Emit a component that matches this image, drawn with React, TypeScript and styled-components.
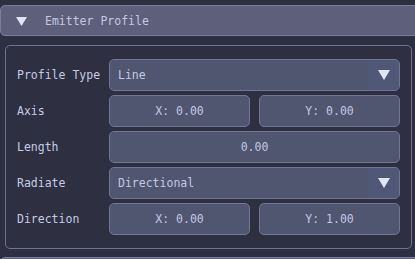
import styled, { createGlobalStyle } from 'styled-components';

const GlobalStyle = createGlobalStyle`
  html, body {
    margin: 0;
    padding: 0;
    background: #2e2f40;
    overflow: hidden;
  }
  body {
    font-family: "DejaVu Sans Mono", "Liberation Mono", monospace;
    font-size: 11.5px;
    color: #c3c8e4;
  }
`

const Page = styled.div`
  box-sizing: border-box;
  padding-top: 5px;
  width: 415px;
  height: 259px;
  overflow: hidden;
`

const Header = styled.div<{ $top?: number }>`
  box-sizing: border-box;
  height: 31px;
  width: 430px;
  margin-top: ${p => p.$top ?? 0}px;
  display: flex;
  align-items: center;
  gap: 18px;
  padding: 1px 0 0 15px;
  background: #5d5f7b;
  border: 1px solid #7b7f9e;
  border-radius: 5px;
  color: #c3c8e4;
`

const Arrow = styled.svg`
  display: block;
  flex: none;
`

const Panel = styled.div`
  box-sizing: border-box;
  margin: 9px 3px 0 5px;
  padding: 13px 11px 13px 11px;
  border: 1px solid #6f7392;
  border-radius: 5px;
  display: flex;
  flex-direction: column;
  gap: 4px;
`

const Row = styled.div`
  display: grid;
  grid-template-columns: 92px 1fr;
  align-items: center;
  height: 32px;
`

const Label = styled.div`
  white-space: nowrap;
  color: #c6cbe6;
`

const Pair = styled.div`
  display: grid;
  grid-template-columns: 1fr 1fr;
  gap: 9px;
  height: 100%;
`

const Field = styled.div<{ $align?: 'left' | 'center' }>`
  box-sizing: border-box;
  height: 100%;
  display: flex;
  align-items: center;
  justify-content: ${p => (p.$align === 'left' ? 'flex-start' : 'center')};
  padding-left: ${p => (p.$align === 'left' ? '8px' : '0')};
  background: #505570;
  border: 1px solid #6f7696;
  border-radius: 5px;
  overflow: hidden;
`

const Select = styled(Field)`
  padding-left: 0;
  justify-content: space-between;
`

const SelectText = styled.span`
  padding-left: 8px;
`

const SelectButton = styled.div`
  width: 31px;
  height: 100%;
  display: flex;
  align-items: center;
  justify-content: center;
  background: #4f5877;
`

const Tri = ({ w = 11, h = 9 }: { w?: number; h?: number }) => (
  <Arrow width={w} height={h} viewBox="0 0 11 9">
    <polygon points="0,0 11,0 5.5,9" fill="#e0e4f6" />
  </Arrow>
)

const App = () => {
  return (
    <>
      <GlobalStyle />
      <Page>
        <Header>
          <Tri />
          <span>Emitter Profile</span>
        </Header>
        <Panel>
          <Row>
            <Label>Profile Type</Label>
            <Select>
              <SelectText>Line</SelectText>
              <SelectButton><Tri w={12} h={10} /></SelectButton>
            </Select>
          </Row>
          <Row>
            <Label>Axis</Label>
            <Pair>
              <Field>X: 0.00</Field>
              <Field>Y: 0.00</Field>
            </Pair>
          </Row>
          <Row>
            <Label>Length</Label>
            <Field>0.00</Field>
          </Row>
          <Row>
            <Label>Radiate</Label>
            <Select>
              <SelectText>Directional</SelectText>
              <SelectButton><Tri w={12} h={10} /></SelectButton>
            </Select>
          </Row>
          <Row>
            <Label>Direction</Label>
            <Pair>
              <Field>X: 0.00</Field>
              <Field>Y: 1.00</Field>
            </Pair>
          </Row>
        </Panel>
        <Header $top={8} />
      </Page>
    </>
  );
}

export default App;
